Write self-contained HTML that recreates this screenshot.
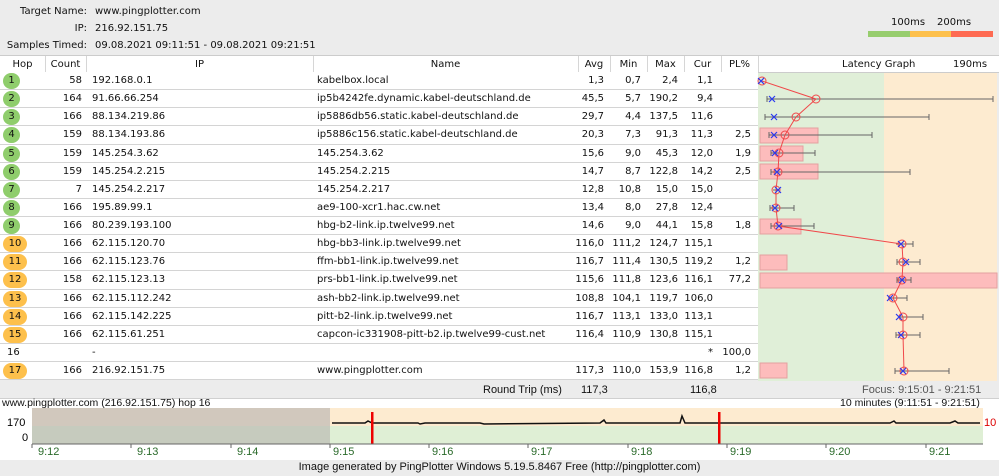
<!DOCTYPE html><html><head><meta charset="utf-8"><style>
*{margin:0;padding:0;box-sizing:border-box}
body{width:999px;height:476px;overflow:hidden;background:#ececec;font-family:"DejaVu Sans",Verdana,sans-serif;font-size:10px;color:#111;position:relative}
.a{position:absolute;white-space:nowrap}
.hd{position:absolute;top:55px;left:0;width:999px;height:18px;background:#fff;border-top:1px solid #ccc;border-bottom:1px solid #ccc}
.hd span{position:absolute;top:3px;text-align:center}
.sep{position:absolute;top:56px;height:16px;width:1px;background:#d6d6d6}
.r{position:absolute;left:0;width:758px;height:18.125px;background:#fff;border-bottom:1px solid #d4d4d4}
.r span{position:absolute;top:3px}
.cnt{right:676px}.ip{left:92px}.nm{left:317px}.av{right:154px}.mn{right:117px}.mx{right:80px}.cu{right:45px}.pl{right:7px}
.r span.h{position:absolute;left:3px;top:1px;height:16px;border-radius:8px;text-align:center;line-height:16px}
.g{width:17px;background:#8fcd6c}.o{width:24px;background:#fdc04c}
.bt{font-family:"Liberation Sans",Arial,sans-serif;font-size:11px}
.lb{position:absolute;right:912px;white-space:nowrap}
</style></head><body>
<div class="lb" style="top:6px">Target Name:</div><div class="a" style="left:95px;top:6px">www.pingplotter.com</div>
<div class="lb" style="top:23px">IP:</div><div class="a" style="left:95px;top:23px">216.92.151.75</div>
<div class="lb" style="top:40px">Samples Timed:</div><div class="a" style="left:95px;top:40px">09.08.2021 09:11:51 - 09.08.2021 09:21:51</div>
<div class="a" style="left:891px;top:17px">100ms</div><div class="a" style="left:937px;top:17px">200ms</div>
<div class="a" style="left:868px;top:31px;width:42px;height:6px;background:#97cd6e"></div>
<div class="a" style="left:910px;top:31px;width:41px;height:6px;background:#fdc04c"></div>
<div class="a" style="left:951px;top:31px;width:42px;height:6px;background:#fe6a52"></div>
<div class="hd"><span style="left:0;width:45px">Hop</span><span style="left:45px;width:41px">Count</span><span style="left:86px;width:227px">IP</span><span style="left:313px;width:265px">Name</span><span style="left:578px;width:32px">Avg</span><span style="left:610px;width:37px">Min</span><span style="left:647px;width:37px">Max</span><span style="left:684px;width:37px">Cur</span><span style="left:721px;width:37px">PL%</span><span style="left:842px">Latency Graph</span><span style="left:953px">190ms</span></div>
<div class="sep" style="left:45px"></div><div class="sep" style="left:86px"></div><div class="sep" style="left:313px"></div><div class="sep" style="left:578px"></div><div class="sep" style="left:610px"></div><div class="sep" style="left:647px"></div><div class="sep" style="left:684px"></div><div class="sep" style="left:721px"></div><div class="sep" style="left:758px"></div>
<div class="a" style="left:758px;top:73px;width:126px;height:308px;background:#e0efd8"></div>
<div class="a" style="left:884px;top:73px;width:113px;height:308px;background:#fdebd0"></div>

<div class="r" style="top:72px"><span class="h g">1</span><span class="cnt">58</span><span class="ip">192.168.0.1</span><span class="nm">kabelbox.local</span><span class="av">1,3</span><span class="mn">0,7</span><span class="mx">2,4</span><span class="cu">1,1</span></div>
<div class="r" style="top:90.1px"><span class="h g">2</span><span class="cnt">164</span><span class="ip">91.66.66.254</span><span class="nm">ip5b4242fe.dynamic.kabel-deutschland.de</span><span class="av">45,5</span><span class="mn">5,7</span><span class="mx">190,2</span><span class="cu">9,4</span></div>
<div class="r" style="top:108.25px"><span class="h g">3</span><span class="cnt">166</span><span class="ip">88.134.219.86</span><span class="nm">ip5886db56.static.kabel-deutschland.de</span><span class="av">29,7</span><span class="mn">4,4</span><span class="mx">137,5</span><span class="cu">11,6</span></div>
<div class="r" style="top:126.4px"><span class="h g">4</span><span class="cnt">159</span><span class="ip">88.134.193.86</span><span class="nm">ip5886c156.static.kabel-deutschland.de</span><span class="av">20,3</span><span class="mn">7,3</span><span class="mx">91,3</span><span class="cu">11,3</span><span class="pl">2,5</span></div>
<div class="r" style="top:144.5px"><span class="h g">5</span><span class="cnt">159</span><span class="ip">145.254.3.62</span><span class="nm">145.254.3.62</span><span class="av">15,6</span><span class="mn">9,0</span><span class="mx">45,3</span><span class="cu">12,0</span><span class="pl">1,9</span></div>
<div class="r" style="top:162.6px"><span class="h g">6</span><span class="cnt">159</span><span class="ip">145.254.2.215</span><span class="nm">145.254.2.215</span><span class="av">14,7</span><span class="mn">8,7</span><span class="mx">122,8</span><span class="cu">14,2</span><span class="pl">2,5</span></div>
<div class="r" style="top:180.75px"><span class="h g">7</span><span class="cnt">7</span><span class="ip">145.254.2.217</span><span class="nm">145.254.2.217</span><span class="av">12,8</span><span class="mn">10,8</span><span class="mx">15,0</span><span class="cu">15,0</span></div>
<div class="r" style="top:198.9px"><span class="h g">8</span><span class="cnt">166</span><span class="ip">195.89.99.1</span><span class="nm">ae9-100-xcr1.hac.cw.net</span><span class="av">13,4</span><span class="mn">8,0</span><span class="mx">27,8</span><span class="cu">12,4</span></div>
<div class="r" style="top:217px"><span class="h g">9</span><span class="cnt">166</span><span class="ip">80.239.193.100</span><span class="nm">hbg-b2-link.ip.twelve99.net</span><span class="av">14,6</span><span class="mn">9,0</span><span class="mx">44,1</span><span class="cu">15,8</span><span class="pl">1,8</span></div>
<div class="r" style="top:235.1px"><span class="h o">10</span><span class="cnt">166</span><span class="ip">62.115.120.70</span><span class="nm">hbg-bb3-link.ip.twelve99.net</span><span class="av">116,0</span><span class="mn">111,2</span><span class="mx">124,7</span><span class="cu">115,1</span></div>
<div class="r" style="top:253.25px"><span class="h o">11</span><span class="cnt">166</span><span class="ip">62.115.123.76</span><span class="nm">ffm-bb1-link.ip.twelve99.net</span><span class="av">116,7</span><span class="mn">111,4</span><span class="mx">130,5</span><span class="cu">119,2</span><span class="pl">1,2</span></div>
<div class="r" style="top:271.4px"><span class="h o">12</span><span class="cnt">158</span><span class="ip">62.115.123.13</span><span class="nm">prs-bb1-link.ip.twelve99.net</span><span class="av">115,6</span><span class="mn">111,8</span><span class="mx">123,6</span><span class="cu">116,1</span><span class="pl">77,2</span></div>
<div class="r" style="top:289.5px"><span class="h o">13</span><span class="cnt">166</span><span class="ip">62.115.112.242</span><span class="nm">ash-bb2-link.ip.twelve99.net</span><span class="av">108,8</span><span class="mn">104,1</span><span class="mx">119,7</span><span class="cu">106,0</span></div>
<div class="r" style="top:307.6px"><span class="h o">14</span><span class="cnt">166</span><span class="ip">62.115.142.225</span><span class="nm">pitt-b2-link.ip.twelve99.net</span><span class="av">116,7</span><span class="mn">113,1</span><span class="mx">133,0</span><span class="cu">113,1</span></div>
<div class="r" style="top:325.75px"><span class="h o">15</span><span class="cnt">166</span><span class="ip">62.115.61.251</span><span class="nm">capcon-ic331908-pitt-b2.ip.twelve99-cust.net</span><span class="av">116,4</span><span class="mn">110,9</span><span class="mx">130,8</span><span class="cu">115,1</span></div>
<div class="r" style="top:343.9px"><span style="left:7px">16</span><span class="ip">-</span><span class="cu">*</span><span class="pl">100,0</span></div>
<div class="r" style="top:362px"><span class="h o">17</span><span class="cnt">166</span><span class="ip">216.92.151.75</span><span class="nm">www.pingplotter.com</span><span class="av">117,3</span><span class="mn">110,0</span><span class="mx">153,9</span><span class="cu">116,8</span><span class="pl">1,2</span></div>

<svg class="a" style="left:0;top:0" width="999" height="476">
<g stroke="#e3a0a0" fill="#fdbcbc">
<rect x="760" y="128" width="58" height="15"/><rect x="760" y="146" width="43" height="15"/><rect x="760" y="164" width="58" height="15"/><rect x="760" y="219" width="41" height="15"/><rect x="760" y="255" width="27" height="15"/><rect x="760" y="273" width="237" height="15"/><rect x="760" y="363" width="27" height="15"/>
</g>
<g stroke="#666" stroke-width="1" fill="none">
<path d="M767 99H993M767 96v6M993 96v6M765 117H929M765 114v6M929 114v6M769 135H872M769 132v6M872 132v6M771 153H815M771 150v6M815 150v6M771 172H910M771 169v6M910 169v6M773 190H778M770 208H794M770 205v6M794 205v6M771 226H814M771 223v6M814 223v6M896 244H913M913 241v6M897 262H920M897 259v6M920 259v6M897 280H911M897 277v6M911 277v6M888 298H907M907 295v6M899 317H923M923 314v6M896 335H920M896 332v6M920 332v6M895 371H949M895 368v6M949 368v6"/>
</g>
<polyline fill="none" stroke="#f0484a" stroke-width="1" points="762,81 816,99 796,117 785,135 779,153 778,172 776,190 776,208 778,226 902,244 903,262 902,280 893,298 903,317 903,335 904,371"/>
<g fill="none" stroke="#f0484a"><circle cx="762" cy="81" r="4"/><circle cx="816" cy="99" r="4"/><circle cx="796" cy="117" r="4"/><circle cx="785" cy="135" r="4"/><circle cx="779" cy="153" r="4"/><circle cx="778" cy="172" r="4"/><circle cx="776" cy="190" r="4"/><circle cx="776" cy="208" r="4"/><circle cx="778" cy="226" r="4"/><circle cx="902" cy="244" r="4"/><circle cx="903" cy="262" r="4"/><circle cx="902" cy="280" r="4"/><circle cx="893" cy="298" r="4"/><circle cx="903" cy="317" r="4"/><circle cx="903" cy="335" r="4"/><circle cx="904" cy="371" r="4"/></g>
<g stroke="#2a3af0" stroke-width="1.2"><path d="M758 78l6 6M764 78l-6 6M769 96l6 6M775 96l-6 6M771 114l6 6M777 114l-6 6M771 132l6 6M777 132l-6 6M772 150l6 6M778 150l-6 6M774 169l6 6M780 169l-6 6M775 187l6 6M781 187l-6 6M772 205l6 6M778 205l-6 6M776 223l6 6M782 223l-6 6M898 241l6 6M904 241l-6 6M903 259l6 6M909 259l-6 6M899 277l6 6M905 277l-6 6M887 295l6 6M893 295l-6 6M896 314l6 6M902 314l-6 6M898 332l6 6M904 332l-6 6M900 368l6 6M906 368l-6 6"/></g>
</svg>

<div class="a" style="left:0;top:381px;width:999px;height:18px;background:#ececec;border-bottom:1px solid #d0d0d0"></div>
<div class="a bt" style="left:483px;top:384px">Round Trip (ms)</div><div class="a bt" style="left:581px;top:384px">117,3</div><div class="a bt" style="left:690px;top:384px">116,8</div>
<div class="a bt" style="left:862px;top:384px;color:#555">Focus: 9:15:01 - 9:21:51</div>
<div class="a" style="left:0;top:399px;width:999px;height:61px;background:#fff"></div>
<div class="a bt" style="left:2px;top:397px;font-size:10.5px">www.pingplotter.com (216.92.151.75) hop 16</div>
<div class="a bt" style="left:840px;top:397px;font-size:10.5px">10 minutes (9:11:51 - 9:21:51)</div>
<svg class="a" style="left:0;top:408px" width="999" height="52">
<rect x="32" y="0" width="298" height="18" fill="#d1c8bd"/><rect x="32" y="18" width="298" height="18" fill="#c6cbbe"/>
<rect x="330" y="0" width="653" height="18" fill="#fdebd0"/><rect x="330" y="18" width="653" height="18" fill="#dfefd5"/>
<polyline fill="none" stroke="#111" stroke-width="1.5" points="332,15 365,15 368,13 372,15 418,15 420,16 425,15 480,15 484,16 600,15 604,12 606,15 680,15 682,8 685,15 890,15 894,13 896,15 950,15 955,13 958,15 980,15"/>
<rect x="371" y="4" width="2.5" height="32" fill="#e00"/><rect x="718" y="4" width="2.5" height="32" fill="#e00"/>
<path d="M32 36V40M131 36v4M231 36v4M330 36v4M429 36v4M528 36v4M628 36v4M727 36v4M826 36v4M926 36v4M32 36H983" stroke="#666"/>
<g fill="#2a6a2a" font-family="Liberation Sans,Arial,sans-serif" font-size="11"><text x="38" y="47">9:12</text><text x="137" y="47">9:13</text><text x="237" y="47">9:14</text><text x="333" y="47">9:15</text><text x="432" y="47">9:16</text><text x="531" y="47">9:17</text><text x="631" y="47">9:18</text><text x="730" y="47">9:19</text><text x="829" y="47">9:20</text><text x="929" y="47">9:21</text></g>
<g font-family="Liberation Sans,Arial,sans-serif" font-size="11"><text x="7" y="18">170</text><text x="22" y="33">0</text><text x="984" y="18" fill="#d00">10</text></g>
</svg>
<div class="a bt" style="left:0;top:461px;width:999px;text-align:center">Image generated by PingPlotter Windows 5.19.5.8467 Free (http://pingplotter.com)</div>
</body></html>
